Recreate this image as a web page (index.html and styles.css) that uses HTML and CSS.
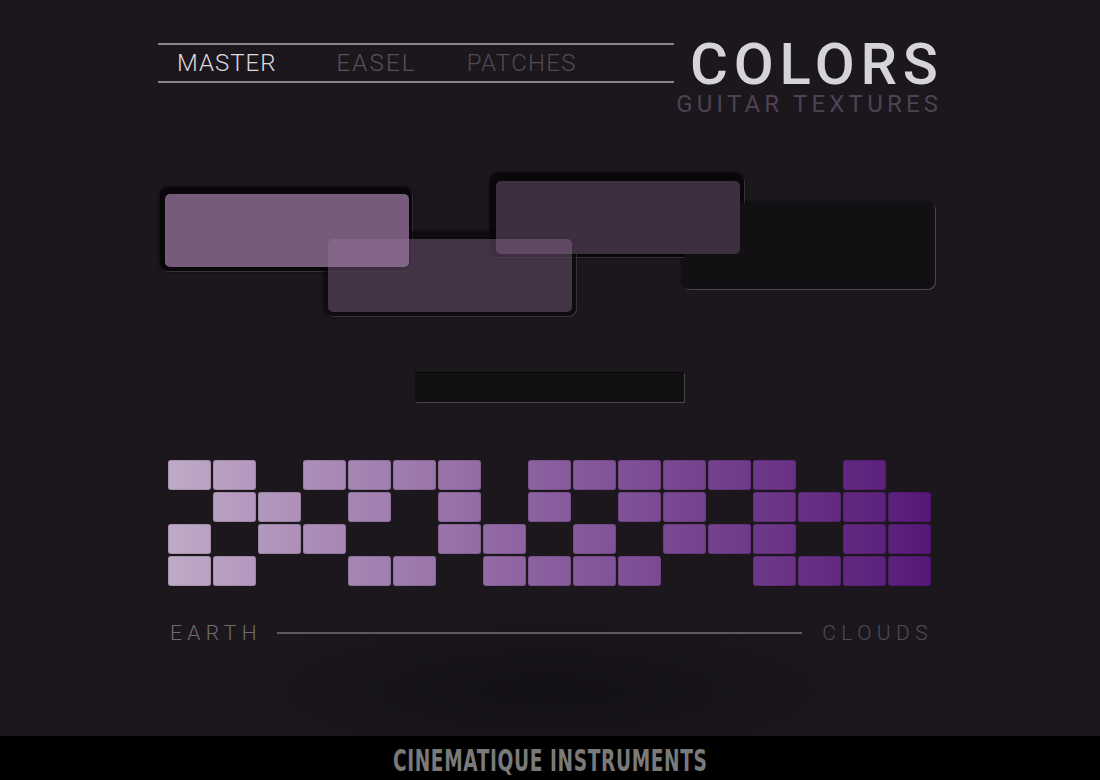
FILE: index.html
```html
<!DOCTYPE html>
<html lang="en">
<head>
<meta charset="utf-8">
<title>Colors – Guitar Textures</title>
<link rel="stylesheet" href="styles.css">
</head>
<body>
<div class="page">
  <main class="main">
    <header class="header">
      <nav class="tabs">
        <span class="tab tab-active">MASTER</span>
        <span class="tab tab-easel">EASEL</span>
        <span class="tab tab-patches">PATCHES</span>
      </nav>
      <div class="title">
        <div class="title-main">COLORS</div>
        <div class="title-sub">GUITAR TEXTURES</div>
      </div>
    </header>

    <section class="stage">
      <div class="frame frame-d"></div>
      <div class="frame frame-a"></div>
      <div class="frame frame-c"></div>
      <div class="frame frame-b"></div>
      <div class="fill fill-d"></div>
      <div class="fill fill-a"></div>
      <div class="fill fill-c"></div>
      <div class="fill fill-b"></div>
    </section>

    <div class="bar-row"><div class="bar"></div></div>

    <div class="grid" id="grid"></div>

    <div class="labels">
      <span class="label label-earth">EARTH</span>
      <span class="line"></span>
      <span class="label label-clouds">CLOUDS</span>
    </div>
  </main>
  <footer class="footer"><span class="brand">CINEMATIQUE INSTRUMENTS</span></footer>
</div>
<script src="app.js"></script>
</body>
</html>
```

FILE: app.js
```js
(function () {
  var rows = [
    "11011110111111010",
    "01101010101101111",
    "10110011010111011",
    "11001101111001111"
  ];
  var grid = document.getElementById("grid");
  rows.forEach(function (r) {
    for (var i = 0; i < r.length; i++) {
      var c = document.createElement("div");
      c.className = r[i] === "1" ? "cell on" : "cell";
      grid.appendChild(c);
    }
  });
})();
```

FILE: styles.css
```css
html, body {
  margin: 0;
  padding: 0;
  background: #000;
}

.page {
  width: 1100px;
  height: 780px;
  display: flex;
  flex-direction: column;
  overflow: hidden;
  font-family: Roboto, "Liberation Sans", sans-serif;
}

.main {
  flex: 1;
  background:
    radial-gradient(ellipse 360px 90px at 550px 690px, rgba(0,0,0,0.28), rgba(0,0,0,0) 100%),
    #1b171d;
  display: flex;
  flex-direction: column;
}

/* Header */
.header {
  display: flex;
  align-items: flex-start;
  padding: 43px 0 0 158px;
  box-sizing: border-box;
  height: 160px;
}

.tabs {
  width: 516px;
  height: 40px;
  box-sizing: border-box;
  border-top: 2px solid #8a868c;
  border-bottom: 2px solid #8a868c;
  display: flex;
  align-items: center;
  padding-left: 19px;
}

.tab {
  font-size: 24px;
  font-weight: 300;
  letter-spacing: 1px;
  line-height: 1;
}

.tab-active { color: #dcdadd; margin-right: 60px; }
.tab-easel { color: #57525a; margin-right: 50px; letter-spacing: 2.2px; }
.tab-patches { color: #504b53; letter-spacing: 1.3px; }

.title {
  width: 264px;
  text-align: right;
  margin-top: -7px;
  white-space: nowrap;
}

.title-main {
  font-size: 58px;
  font-weight: 500;
  color: #d5d4d7;
  letter-spacing: 5.8px;
  margin-right: -5.8px;
  line-height: 56px;
  margin-left: -20px;
}

.title-sub {
  font-size: 24px;
  font-weight: 400;
  color: #4d4253;
  letter-spacing: 4.2px;
  margin-right: -4.2px;
  line-height: 20px;
  margin-top: 2px;
  margin-left: -20px;
}

/* Panels stage (free canvas of overlapping panels) */
.stage {
  position: relative;
  height: 170px;
}

.frame {
  position: absolute;
  border-radius: 8px;
  background: rgba(6, 5, 7, 0.85);
  box-shadow: 0 0 3px 1px rgba(0,0,0,0.45), 1px 1px 0 0 rgba(118,112,122,0.55);
}

.fill {
  position: absolute;
  border-radius: 5px;
}

.frame-a { left: 160px; top: 27px; width: 252px; height: 84px; }
.fill-a  { left: 165px; top: 34px; width: 244px; height: 73px; background: #765c7a; }

.frame-b { left: 324px; top: 72px; width: 252px; height: 84px; background: rgba(6,5,7,0.6); }
.fill-b  { left: 328px; top: 79px; width: 244px; height: 73px; background: rgba(158,120,162,0.37); }

.frame-c { left: 490px; top: 13px; width: 254px; height: 84px; }
.fill-c  { left: 496px; top: 21px; width: 244px; height: 73px; background: #3d2f3f; }

.frame-d { left: 681px; top: 41px; width: 254px; height: 88px; background: rgba(10,9,11,0.5); box-shadow: 0 0 2px rgba(0,0,0,0.3), 1px 1px 0 0 rgba(118,112,122,0.6); }
.fill-d  { left: 685px; top: 43px; width: 248px; height: 83px; background: #121013; }

/* Bar */
.bar-row {
  padding: 42px 0 0 415px;
}

.bar {
  width: 269px;
  height: 29px;
  background: #111111;
  border-top: 1px solid #080808;
  border-radius: 1px;
  box-shadow: 1px 1px 0 0 #49454b;
}

/* Grid */
.grid {
  margin: 58px 0 0 168px;
  display: grid;
  grid-template-columns: repeat(17, 43px);
  grid-auto-rows: 30px;
  gap: 2px;
  width: max-content;
}

.cell {
  border-radius: 3px;
}

.cell.on {
  background: linear-gradient(90deg, #bfaac7 168px, #8a5e9e 550px, #561878 933px);
  background-attachment: fixed;
  box-shadow: inset 0 0 0 1px rgba(0,0,0,0.12);
}

/* Labels */
.labels {
  display: flex;
  align-items: center;
  margin: 35px 0 0 170px;
  width: 762px;
  height: 24px;
}

.label {
  font-size: 21px;
  font-weight: 300;
  letter-spacing: 5.4px;
  line-height: 24px;
}

.label-earth { color: #6f6b72; }
.label-clouds { color: #4f4b55; margin-right: -1px; }

.line {
  flex: 1;
  height: 2px;
  background: #5d595f;
  margin: 0 20px 0 15px;
}

/* Footer */
.footer {
  height: 44px;
  background: #000;
  display: flex;
  justify-content: center;
  align-items: center;
}

.brand {
  display: inline-block;
  font-family: "DejaVu Sans", sans-serif;
  font-weight: 700;
  font-size: 31px;
  color: #7a7a7a;
  letter-spacing: 1px;
  transform: scaleX(0.6);
  white-space: nowrap;
  line-height: 44px;
  margin-top: 4px;
}
```
